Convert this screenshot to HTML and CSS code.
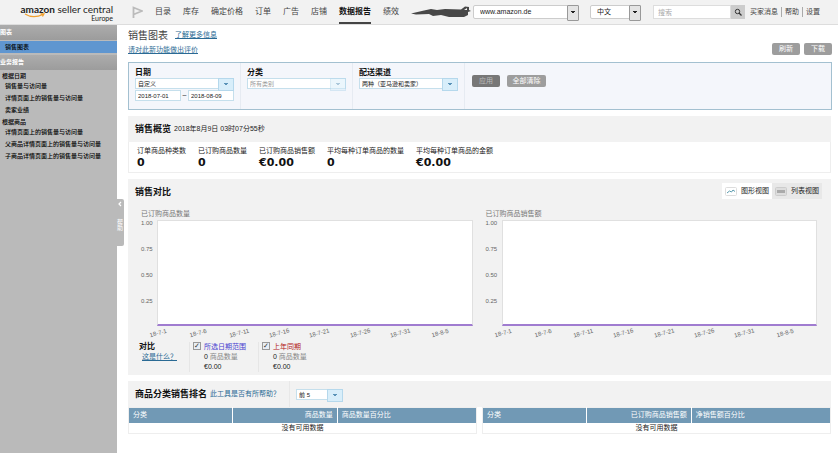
FILE: index.html
```html
<!DOCTYPE html>
<html lang="zh-CN">
<head>
    <meta charset="UTF-8">
    <meta name="viewport" content="width=device-width, initial-scale=1.0">
    <title>销售图表 - Amazon Seller Central</title>
    <link rel="stylesheet" href="styles.css">
</head>

<body>
    <header class="topbar">
        <a class="logo" href="#">
            <span class="logo-name"><b>amazon</b> seller central</span>
            <span class="logo-region">Europe</span>
            <svg class="logo-smile" viewBox="0 0 22 5"><path d="M1 1Q9 6 19 1.500M16.500 0.800L20 0.800L18.500 3.500" fill="none" stroke="#f0a030" stroke-width="1.200"/></svg>
        </a>
        <svg class="flag" viewBox="0 0 11 13"><path d="M1.500 12V1.500L10 5L1.500 8.500" fill="none" stroke="#bbb" stroke-width="1.800"/></svg>
        <nav>
            <a href="#">目录</a>
            <a href="#">库存</a>
            <a href="#">确定价格</a>
            <a href="#">订单</a>
            <a href="#">广告</a>
            <a href="#">店铺</a>
            <a href="#" class="current">数据报告</a>
            <a href="#">绩效</a>
        </nav>
        <svg class="scribble" viewBox="0 0 60 13"><path d="M0 7.500L13 4.500L20 3L26 4L34 3L50 3.500L54 0.500L58 1L58 4L60 5L57 6L57 9L53 11L38 11L30 9L22 10L18 8L5 8.500Z" fill="#484848"/><path d="M53 4L56 2L56 4Z" fill="#f2f2f2"/></svg>
        <span class="picker picker-site">
            <select aria-label="站点"><option>www.amazon.de</option></select>
        </span>
        <span class="picker picker-lang">
            <select aria-label="语言"><option>中文</option></select>
        </span>
        <form class="search">
            <input type="text" aria-label="搜索" placeholder="搜索">
            <button type="button" aria-label="搜索">
                <svg viewBox="0 0 8 8"><circle cx="3.500" cy="3.500" r="2.200" fill="none" stroke="#333"/><path d="M5 5L7.500 7.500" stroke="#333" stroke-width="1.200"/></svg>
            </button>
        </form>
        <div class="links">
            <a href="#">买家消息</a>
            <a href="#">帮助</a>
            <a href="#">设置</a>
        </div>
    </header>

    <div class="page">
        <aside class="sidebar">
            <h2>图表</h2>
            <a class="active" href="#">销售图表</a>
            <h2>业务报告</h2>
            <h3>根据日期</h3>
            <a href="#">销售量与访问量</a>
            <a href="#">详情页面上的销售量与访问量</a>
            <a href="#">卖家业绩</a>
            <h3>根据商品</h3>
            <a href="#">详情页面上的销售量与访问量</a>
            <a href="#">父商品详情页面上的销售量与访问量</a>
            <a href="#">子商品详情页面上的销售量与访问量</a>
            <button class="help-tab" type="button">
                <svg viewBox="0 0 4 6"><path d="M3 1L1 3L3 5" fill="none" stroke="#fff" stroke-width="1.200"/></svg>
                <span>帮助</span>
            </button>
        </aside>

        <main>
            <div class="page-head">
                <div>
                    <div class="page-title">
                        <h1>销售图表</h1>
                        <a href="#">了解更多信息</a>
                    </div>
                    <a href="#">请对此新功能做出评价</a>
                </div>
                <div class="page-actions">
                    <button class="btn light" type="button">刷新</button>
                    <button class="btn light" type="button">下载</button>
                </div>
            </div>

            <form class="filters">
                <div class="filter">
                    <label for="date-range">日期</label>
                    <span class="combo"><select id="date-range"><option>自定义</option></select></span>
                    <div class="dates">
                        <input type="text" aria-label="开始日期" value="2018-07-01">
                        <span>–</span>
                        <input type="text" aria-label="结束日期" value="2018-08-09">
                    </div>
                </div>
                <div class="filter">
                    <label for="category">分类</label>
                    <span class="combo off"><select id="category" disabled><option>所有类别</option></select></span>
                </div>
                <div class="filter">
                    <label for="channel">配送渠道</label>
                    <span class="combo"><select id="channel"><option>两种（亚马逊和卖家）</option></select></span>
                </div>
                <div class="filter-actions">
                    <button class="btn dark" type="button">应用</button>
                    <button class="btn light" type="button">全部清除</button>
                </div>
            </form>

            <section class="overview">
                <div class="section-head">
                    <h2>销售概览</h2>
                    <span>2018年8月9日 03时07分55秒</span>
                </div>
                <dl class="metrics">
                    <div><dt>订单商品种类数</dt><dd>0</dd></div>
                    <div><dt>已订购商品数量</dt><dd>0</dd></div>
                    <div><dt>已订购商品销售额</dt><dd>€0.00</dd></div>
                    <div><dt>平均每种订单商品的数量</dt><dd>0</dd></div>
                    <div><dt>平均每种订单商品的金额</dt><dd>€0.00</dd></div>
                </dl>
            </section>

            <section class="compare">
                <div class="section-head">
                    <h2>销售对比</h2>
                    <div class="views">
                        <button class="on" type="button">
                            <svg viewBox="0 0 12 9"><rect x="0.500" y="0.500" width="11" height="8" rx="1" fill="#fff" stroke="#ddd"/><path d="M2 6L4.500 4L6.500 5L8 3L10 4.500" fill="none" stroke="#5b9cae"/></svg>
                            图形视图
                        </button>
                        <button type="button">
                            <svg viewBox="0 0 12 9"><rect x="0.500" y="0.500" width="11" height="8" rx="1" fill="#ddd" stroke="#ccc"/><path d="M2 4.500H10" stroke="#aaa" stroke-width="3"/></svg>
                            列表视图
                        </button>
                    </div>
                </div>

                <div class="charts">
                    <div class="chart">
                        <h3>已订购商品数量</h3>
                        <div class="chart-body">
                            <div class="y-axis"><span>1.00</span><span>0.75</span><span>0.50</span><span>0.25</span></div>
                            <div class="plot"></div>
                        </div>
                        <div class="x-axis"><span>18-7-1</span><span>18-7-6</span><span>18-7-11</span><span>18-7-16</span><span>18-7-21</span><span>18-7-26</span><span>18-7-31</span><span>18-8-5</span></div>
                    </div>
                    <div class="chart">
                        <h3>已订购商品销售额</h3>
                        <div class="chart-body">
                            <div class="y-axis"><span>1.00</span><span>0.75</span><span>0.50</span><span>0.25</span></div>
                            <div class="plot"></div>
                        </div>
                        <div class="x-axis"><span>18-7-1</span><span>18-7-6</span><span>18-7-11</span><span>18-7-16</span><span>18-7-21</span><span>18-7-26</span><span>18-7-31</span><span>18-8-5</span></div>
                    </div>
                </div>

                <div class="legend">
                    <div class="legend-title">
                        <h3>对比</h3>
                        <a href="#">这是什么？</a>
                    </div>
                    <div class="series">
                        <input type="checkbox" id="selected" checked>
                        <div>
                            <label class="blue" for="selected">所选日期范围</label>
                            <p>0 <span>商品数量</span></p>
                            <p>€0.00</p>
                        </div>
                    </div>
                    <div class="series">
                        <input type="checkbox" id="last-year" checked>
                        <div>
                            <label class="red" for="last-year">上年同期</label>
                            <p>0 <span>商品数量</span></p>
                            <p>€0.00</p>
                        </div>
                    </div>
                </div>
            </section>

            <section class="ranking">
                <div class="section-head">
                    <h2>商品分类销售排名</h2>
                    <a href="#">此工具是否有所帮助？</a>
                    <div class="top-count">
                        <span class="combo"><select aria-label="显示数量"><option>前 5</option></select></span>
                    </div>
                </div>
                <div class="tables">
                    <table>
                        <thead>
                            <tr><th>分类</th><th class="num">商品数量</th><th>商品数量百分比</th></tr>
                        </thead>
                        <tbody>
                            <tr><td colspan="3">没有可用数据</td></tr>
                        </tbody>
                    </table>
                    <table>
                        <thead>
                            <tr><th>分类</th><th class="num">已订购商品销售额</th><th>净销售额百分比</th></tr>
                        </thead>
                        <tbody>
                            <tr><td colspan="3">没有可用数据</td></tr>
                        </tbody>
                    </table>
                </div>
            </section>
        </main>
    </div>
</body>
</html>
```
FILE: styles.css
```css
* {
    box-sizing: border-box;
}

body {
    margin: 0;
    min-height: 100vh;
    display: flex;
    flex-direction: column;
    font-family: "Liberation Sans", "Noto Sans CJK SC", sans-serif;
    font-size: 7px;
    line-height: 10px;
    color: #222;
    background-color: #fff;
}

h1, h2, h3, p, dl, dd {
    margin: 0;
}

a {
    color: #2a6a94;
}

button, input, select {
    font: inherit;
    color: inherit;
    margin: 0;
    padding: 0;
    border: 0;
    border-radius: 0;
}

select {
    appearance: none;
    display: block;
    width: 100%;
    background-color: #fff;
}

/* top bar */

.topbar {
    display: flex;
    align-items: center;
    height: 25px;
    padding-right: 18px;
    background-color: #f2f2f2;
    border-bottom: 1px solid #ddd;
}

.topbar a {
    color: #444;
    text-decoration: none;
}

.topbar .logo {
    position: relative;
    width: 113px;
    font-family: Lato, sans-serif;
    text-align: right;
    color: #222;
    white-space: nowrap;
}

.logo-name {
    display: block;
    font-size: 10px;
    line-height: 12px;
}

.logo-region {
    display: block;
    line-height: 6px;
}

.logo-smile {
    position: absolute;
    left: 24px;
    top: 10px;
    width: 22px;
    height: 5px;
}

.flag {
    width: 11px;
    height: 13px;
    margin-left: 19px;
}

nav {
    display: flex;
    gap: 12px;
    margin-left: 12px;
    font-size: 8px;
    line-height: 20px;
    white-space: nowrap;
}

nav a {
    border-top: 2px solid transparent;
    border-bottom: 2px solid transparent;
}

nav .current {
    color: #111;
    font-weight: bold;
    border-bottom-color: #444;
}

.scribble {
    width: 60px;
    height: 13px;
    margin-left: 12px;
}

.picker {
    position: relative;
}

.picker select {
    height: 14px;
    border: 1px solid #ccc;
    padding-left: 6px;
    border-radius: 2px;
}

.picker::after {
    content: "";
    position: absolute;
    top: 0;
    right: 0;
    width: 10px;
    height: 14px;
    border: 1px solid #999;
    border-radius: 1px;
    background: linear-gradient(#222, #222) center 5px / 4px 1px no-repeat, linear-gradient(#222, #222) center 6px / 2px 1px no-repeat, #e4e4e4;
    pointer-events: none;
}

.picker-site {
    width: 106px;
    margin-left: 2px;
}

.picker-lang {
    width: 51px;
    margin-left: 11px;
}

.search {
    display: flex;
    flex: 1;
    min-width: 60px;
    margin-left: 12px;
}

.search input {
    flex: 1;
    min-width: 0;
    height: 14px;
    padding-left: 4px;
    border: 1px solid #ddd;
    background-color: #fff;
}

.search input::placeholder {
    color: #aaa;
}

.search button {
    width: 14px;
    height: 14px;
    background-color: #ccc;
}

.search svg {
    display: block;
    width: 8px;
    height: 8px;
    margin: 0 auto;
}

.links {
    display: flex;
    margin-left: 5px;
    white-space: nowrap;
}

.links a + a {
    margin-left: 3px;
    padding-left: 3px;
    border-left: 1px solid #aaa;
}

/* sidebar */

.page {
    display: flex;
    flex: 1;
}

.sidebar {
    position: relative;
    flex: none;
    width: 117px;
    background-color: #bababa;
    font-size: 6px;
    line-height: 10px;
}

.sidebar h2 {
    margin-bottom: 1px;
    font-size: 6px;
    line-height: 15px;
    color: #fff;
    background: linear-gradient(#acacac, #9c9c9c);
}

.sidebar h3 {
    padding-left: 2px;
    font-size: 6px;
    line-height: 10px;
    font-weight: 500;
    color: #000;
}

.sidebar a {
    display: block;
    padding-left: 5px;
    margin-bottom: 2px;
    font-weight: 500;
    color: #000;
    text-decoration: none;
    white-space: nowrap;
}

.sidebar .active {
    line-height: 12px;
    background-color: #5f96d0;
}

.help-tab {
    position: absolute;
    top: 174px;
    left: 116px;
    width: 8px;
    height: 47px;
    padding-top: 2px;
    display: flex;
    flex-direction: column;
    align-items: center;
    gap: 12px;
    line-height: 6px;
    color: #fff;
    background-color: #bababa;
    border-radius: 0 2px 2px 0;
}

.help-tab svg {
    width: 4px;
    height: 6px;
}

.help-tab span {
    width: 6px;
}

/* main column */

main {
    flex: 1;
    min-width: 0;
    padding: 5px 6px 20px 11px;
}

.page-head {
    display: flex;
    justify-content: space-between;
    align-items: flex-end;
    margin-bottom: 7px;
}

.page-title {
    display: flex;
    gap: 7px;
    line-height: 9px;
    margin-bottom: 3px;
}

.page-title h1 {
    font-size: 10px;
    line-height: 12px;
    font-weight: normal;
    color: #444;
}

.page-actions {
    display: flex;
    gap: 4px;
}

.btn {
    width: 28px;
    height: 12px;
    color: #fff;
    border-radius: 2px;
}

.btn.light {
    background-color: #9d9d9d;
}

.btn.dark {
    color: #bbb;
    background-color: #777;
}

.filters {
    display: flex;
    height: 48px;
    margin-bottom: 6px;
    border: 1px solid #a3c0d0;
    background-color: #f4f6fb;
}

.filter {
    width: 112px;
    padding: 4px 6px;
    border-right: 1px solid #e6ebf2;
}

.filter label {
    display: block;
    font-size: 8px;
    line-height: 11px;
    font-weight: bold;
    color: #111;
}

.combo {
    display: block;
    position: relative;
}

.combo select {
    height: 11px;
    padding-left: 2px;
    font-size: 6px;
    border: 1px solid #c5dfec;
    opacity: 1;
}

.combo::after {
    content: "";
    position: absolute;
    top: 0;
    right: 0;
    width: 14px;
    height: 11px;
    border: 1px solid #b5d8ec;
    background: linear-gradient(#5a93b8, #5a93b8) center 4px / 4px 1px no-repeat, linear-gradient(#5a93b8, #5a93b8) center 5px / 2px 1px no-repeat, #d8eefa;
    pointer-events: none;
}

.combo.off {
    color: #999;
}

.combo.off::after {
    opacity: 0.5;
}

.dates {
    display: flex;
    justify-content: space-between;
    margin-top: 1px;
}

.dates input {
    width: 46px;
    height: 11px;
    padding-left: 2px;
    font-size: 6px;
    border: 1px solid #c5dfec;
    background-color: #fff;
}

.filter-actions {
    display: flex;
    gap: 7px;
    padding: 12px 7px;
}

.filter-actions .light {
    width: 39px;
}

/* sections */

section {
    margin: 0 1px 6px 0;
    background-color: #f2f2f2;
}

.section-head {
    display: flex;
    align-items: center;
    height: 26px;
    padding-left: 7px;
}

.section-head h2 {
    font-size: 9px;
    line-height: 14px;
    color: #111;
}

.section-head h2 + span, .section-head h2 + a {
    margin-left: 3px;
    text-decoration: none;
}

.metrics {
    display: flex;
    gap: 12px;
    padding: 2px 8px 3px;
    border: 1px solid #eee;
    border-top: 0;
    background-color: #fff;
}

.metrics dt {
    line-height: 13px;
}

.metrics dd {
    font-family: "DejaVu Sans", sans-serif;
    font-size: 11px;
    line-height: 12px;
    font-weight: bold;
    color: #111;
}

.compare .section-head {
    justify-content: space-between;
    padding-right: 9px;
}

.views {
    display: flex;
    margin-bottom: 2px;
}

.views button {
    display: flex;
    align-items: center;
    gap: 4px;
    height: 16px;
    padding: 0 3px;
    background-color: #e8e8e8;
}

.views .on {
    background-color: #fff;
}

.views svg {
    width: 12px;
    height: 9px;
}

.charts {
    display: grid;
    grid-template-columns: 1fr 1fr;
    gap: 13px;
    padding: 2px 14px 0 13px;
}

.chart h3 {
    font-size: 7px;
    line-height: 13px;
    font-weight: normal;
    color: #777;
}

.chart-body {
    display: flex;
    height: 106px;
}

.y-axis {
    display: flex;
    flex-direction: column;
    width: 16px;
    font-size: 6px;
    line-height: 6px;
    color: #666;
}

.y-axis span {
    height: 26px;
}

.plot {
    flex: 1;
    border: 1px solid #e0e0e0;
    border-bottom: 2px solid #a07cd0;
    background-color: #fff;
}

.x-axis {
    display: flex;
    margin: 3px 12px 0 -3px;
    font-size: 6px;
    line-height: 8px;
    color: #666;
}

.x-axis span {
    flex: 1;
    text-align: center;
    transform: rotate(-15deg);
}

.legend {
    display: flex;
    padding: 5px 0 3px 11px;
}

.legend h3 {
    font-size: 8px;
    line-height: 10px;
    color: #111;
}

.legend-title {
    width: 50px;
}

.legend-title a {
    margin-left: 3px;
}

.series {
    display: flex;
    gap: 3px;
    width: 69px;
    padding-left: 3px;
    border-left: 1px solid #e6e6e6;
}

.series input {
    appearance: none;
    width: 8px;
    height: 8px;
    border: 1px solid #999;
    background-color: #e8eef4;
    font-size: 7px;
    line-height: 6px;
}

.series input:checked::before {
    content: "✓";
    font-family: "DejaVu Sans", sans-serif;
    font-weight: bold;
    display: block;
    color: #333;
}

.series label {
    display: block;
}

.series p span {
    color: #888;
}

.blue {
    color: #4a3fd0;
}

.red {
    color: #b22020;
}

/* ranking */

.ranking {
    margin-bottom: 0;
}

.top-count {
    align-self: stretch;
    display: flex;
    align-items: center;
    margin-left: 9px;
    padding-left: 6px;
    border-left: 1px solid #e8e8e8;
}

.top-count .combo {
    width: 47px;
}

.tables {
    display: grid;
    grid-template-columns: 1fr 1fr;
    gap: 5px;
    background-color: #fff;
}

table {
    width: 100%;
    table-layout: fixed;
    border-collapse: collapse;
    border: 1px solid #eee;
}

th {
    height: 15px;
    padding: 0 4px;
    font-weight: normal;
    text-align: left;
    color: #fff;
    background-color: #7199b5;
}

th:first-child {
    width: 30%;
}

th:nth-child(2) {
    width: 30%;
}

th + th {
    border-left: 1px solid #fff;
}

th.num {
    text-align: right;
}

td {
    height: 11px;
    padding: 0;
    line-height: 10px;
    text-align: center;
}
```
